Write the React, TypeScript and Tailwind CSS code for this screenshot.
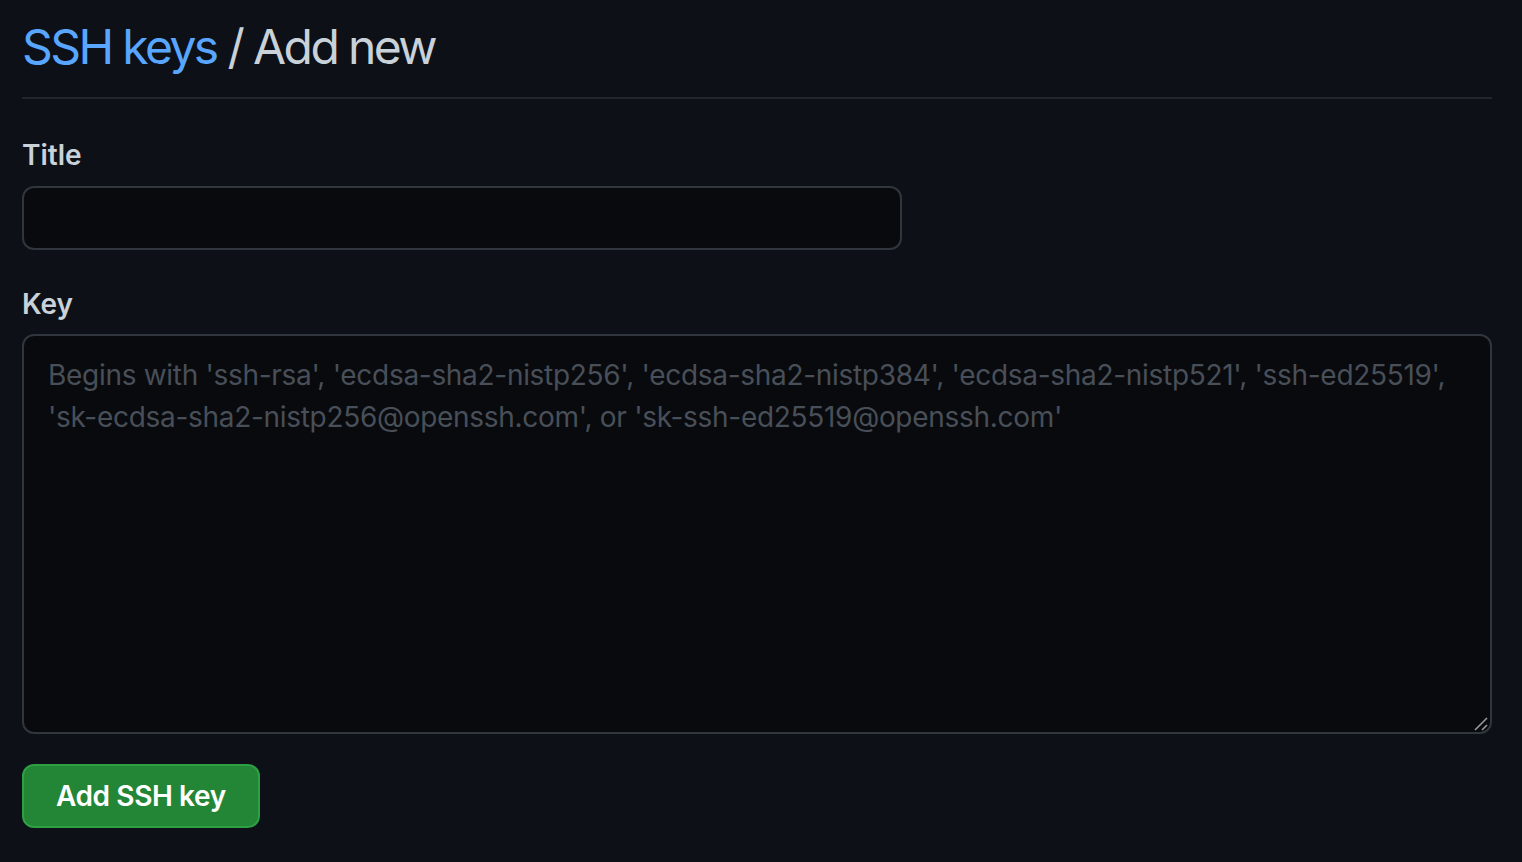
import React from 'react'

const placeholder =
  "Begins with 'ssh-rsa', 'ecdsa-sha2-nistp256', 'ecdsa-sha2-nistp384', 'ecdsa-sha2-nistp521', 'ssh-ed25519', 'sk-ecdsa-sha2-nistp256@openssh.com', or 'sk-ssh-ed25519@openssh.com'"

function ResizeGrip() {
  return (
    <svg
      className="pointer-events-none absolute right-[4px] bottom-[3px]"
      width="14"
      height="14"
      viewBox="0 0 14 14"
      aria-hidden="true"
    >
      <path d="M1 13 L13 1" stroke="#9a9a9a" strokeWidth="1.6" />
      <path d="M8 13 L13 8" stroke="#9a9a9a" strokeWidth="1.6" />
    </svg>
  )
}

export default function App() {
  return (
    <div className="min-h-[862px] bg-[#0d1117] pl-[22px] pr-[30px] font-['Inter','Liberation_Sans',sans-serif] text-[#c9d1d9]">
      <div className="border-b-2 border-[#21262d] pt-[17px] pb-[20px]">
        <h1 className="text-[48px] leading-[60px] font-normal tracking-[-2.6px]">
          <a href="#" className="text-[#58a6ff]">SSH keys</a>
          <span className="text-[#c9d1d9]"> / Add new</span>
        </h1>
      </div>

      <form className="flex flex-col">
        <label className="mt-[35px] text-[28px] leading-[42px] font-semibold">Title</label>
        <input
          type="text"
          className="mt-[10px] h-[64px] w-[880px] rounded-[12px] border-2 border-[#30363d] bg-[#080a0e] px-[24px] text-[28px] text-[#c9d1d9] outline-none"
        />

        <label className="mt-[33px] text-[28px] leading-[42px] font-semibold">Key</label>
        <div className="relative mt-[9px]">
          <textarea
            placeholder={placeholder}
            className="block h-[400px] w-full resize-none rounded-[12px] border-2 border-[#30363d] bg-[#080a0e] px-[24px] pt-[18px] pb-[14px] text-[28px] leading-[42px] tracking-[-0.3px] text-[#c9d1d9] outline-none placeholder:text-[#484f58]"
          />
          <ResizeGrip />
        </div>

        <div className="mt-[30px]">
          <button
            type="button"
            className="h-[64px] rounded-[12px] border-2 border-[#2ea043] bg-[#238636] px-[32px] text-[28px] font-semibold tracking-[-0.4px] text-white"
          >
            Add SSH key
          </button>
        </div>
      </form>
    </div>
  )
}
